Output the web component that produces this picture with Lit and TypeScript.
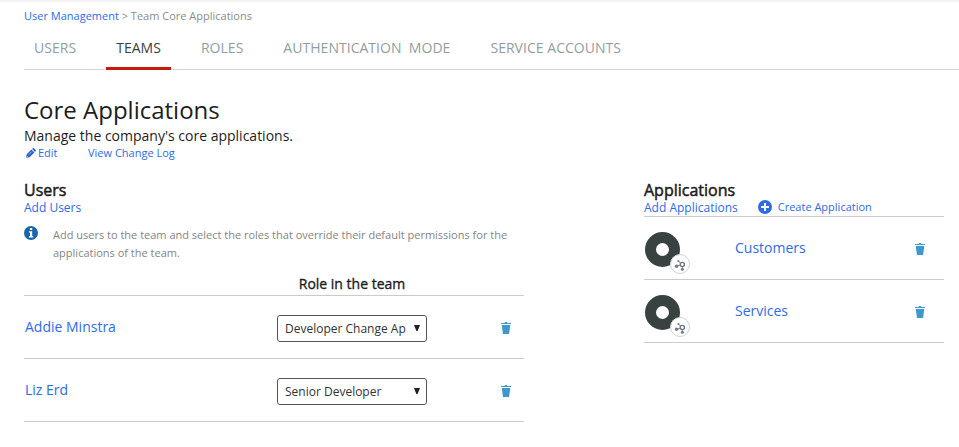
import { LitElement, html, css, svg } from "lit";
import { customElement, property } from "lit/decorators.js";
import { classMap } from "lit/directives/class-map.js";

const trashIcon = html`<svg width="10" height="12" viewBox="0 0 10 12">
  <path fill="#3f98cb" d="M0 1h3.8V0h2.4v1H10v1H0zM.7 3h8.6L8.1 12H2z" />
</svg>`;

const graphBadge = svg`
  <circle cx="35" cy="33" r="9.5" fill="#fff" stroke="#d2d2d2" />
  <g fill="none" stroke="#8a8f94" stroke-width="1.1">
    <circle cx="37.3" cy="33.5" r="2.1" stroke="#687885" stroke-width="1.4" />
    <path d="M33 30.1l2.6 1.8M31.6 35l3.6-.8M37.4 36v2" />
  </g>
  <circle cx="33.4" cy="30" r="1.1" fill="#8c857c" />
  <circle cx="31.6" cy="35.2" r="1.7" fill="#747b82" />
  <circle cx="37.4" cy="38.3" r="1.5" fill="#747b82" />`;

@customElement("role-select")
export class RoleSelect extends LitElement {
  @property() value = "";

  static styles = css`
    :host { display: flex; box-sizing: border-box; width: 150px; height: 27px; border: 1px solid #555; border-radius: 3px; align-items: center; padding: 0 6px 0 7px; background: #fff; }
    .value { width: 123px; overflow: hidden; white-space: nowrap; font-size: 12px; line-height: 18px; color: #333; }
    svg { display: block; margin: 0 0 2px auto; }
  `;

  render() {
    return html`<span class="value">${this.value}</span>
      <svg width="6" height="6" viewBox="0 0 6 6"><path d="M0 0h6L3.6 6H2.4z" fill="#222" /></svg>`;
  }
}

@customElement("app-root")
export class AppRoot extends LitElement {
  private tabs = ["USERS", "TEAMS", "ROLES", "AUTHENTICATION\u00a0 MODE", "SERVICE ACCOUNTS"];
  private users = [
    { name: "Addie Minstra", role: "Developer Change Ap" },
    { name: "Liz Erd", role: "Senior Developer" },
  ];
  private apps = ["Customers", "Services"];

  static styles = css`
    :host { display: block; box-sizing: border-box; height: 447px; overflow: hidden; background: #fff; border-top: 2px solid #f4f4f4; padding: 5px 0 0 24px; font-family: "Open Sans", "Noto Sans", sans-serif; color: #1d1d1d; white-space: nowrap; }
    svg { display: block; }
    a { color: #2e6be6; text-decoration: none; }
    .crumbs { height: 18px; line-height: 18px; font-size: 11px; color: #8c8c8c; }
    .tabs { display: flex; gap: 20px; height: 45px; box-sizing: border-box; border-bottom: 1px solid #d3d6d6; font-size: 14px; letter-spacing: 0.03px; color: #929d9f; }
    .tab { box-sizing: border-box; height: 45px; padding: 13px 10px 0; line-height: 20px; }
    .tab.on { color: #384043; border-bottom: 3px solid #c8190f; }
    h1 { margin: 23px 0 0; font-size: 24px; line-height: 34px; font-weight: 400; }
    .desc { font-size: 14px; line-height: 19px; height: 18px; margin-top: -1px; padding-bottom: 1px; }
    .links { display: flex; height: 16px; font-size: 11px; line-height: 16px; padding-left: 2px; }
    .edit { display: flex; align-items: center; gap: 2px; width: 62px; }
    .columns { display: flex; gap: 120px; margin-top: 19px; }
    .users { width: 500px; }
    .apps { width: 300px; }
    h2 { margin: 0; font-size: 16px; line-height: 20px; font-weight: 400; -webkit-text-stroke: 0.5px #1d1d1d; }
    .add { font-size: 12px; line-height: 16px; height: 16px; display: flex; }
    .info { display: flex; gap: 15px; margin-top: 10px; height: 46px; font-size: 11px; line-height: 18px; color: #858585; }
    .info p { margin: 0; }
    .head { box-sizing: border-box; height: 24px; border-bottom: 1px solid #cbcbcb; padding: 2px 0 0 253px; width: 500px; }
    .head span { display: block; width: 150px; text-align: center; font-size: 14px; line-height: 20px; -webkit-text-stroke: 0.35px #1d1d1d; }
    .row { box-sizing: border-box; height: 63px; border-bottom: 1px solid #cbcbcb; display: grid; align-items: center; font-size: 14px; line-height: 20px; }
    .user { grid-template-columns: 252px 224px 24px; padding-left: 1px; }
    .user > svg { margin-top: 2px; }
    .user role-select { margin-top: 3px; }
    .app { grid-template-columns: 90px 180px 30px; padding-left: 1px; }
    .app > svg:last-child { margin-top: 2px; }
    .logo { margin-top: 14px; align-self: start; }
    .create { font-size: 11px; line-height: 14px; height: 14px; display: flex; gap: 6px; align-items: center; margin-left: 20px; }
    .addbar { box-sizing: border-box; height: 17px; border-bottom: 1px solid #cbcbcb; }
  `;

  render() {
    return html`
      <nav class="crumbs"><a>User Management</a> &gt; Team Core Applications</nav>
      <nav class="tabs">
        ${this.tabs.map((t) => html`<div class=${classMap({ tab: true, on: t === "TEAMS" })}>${t}</div>`)}
      </nav>
      <h1>Core Applications</h1>
      <div class="desc">Manage the company's core applications.</div>
      <div class="links">
        <a class="edit">
          <svg width="10" height="10" viewBox="0 0 10 10">
            <path fill="#2e62cf" d="M0 9.8l.7-3.5L5.4 1.6l3 3-4.8 4.7zM6.1 1L6.9.3q.6-.5 1.2 0l1.6 1.6q.5.6 0 1.2l-.7.8z" />
            <path stroke="#fff" stroke-width=".5" d="M2.8 6.6l2.8-2.8" />
            <path fill="#fff" d="M1 8l1 1-.8.2-.4-.4z" />
          </svg>
          Edit</a>
        <a>View Change Log</a>
      </div>
      <div class="columns">
        <section class="users">
          <h2>Users</h2>
          <div class="add"><a>Add Users</a></div>
          <div class="info">
            <svg width="14" height="14" viewBox="0 0 14 14">
              <circle cx="7" cy="7" r="7" fill="#1b66aa" />
              <path fill="#fff" d="M5.9 2h2.3v2H5.9zM5 5.3h3.2v4.8h1v1.3H5v-1.3h1V6.6H5z" />
            </svg>
            <p>Add users to the team and select the roles that override their default permissions for the<br />applications of the team.</p>
          </div>
          <div class="head"><span>Role in the team</span></div>
          ${this.users.map((u) => html`<div class="row user">
            <a>${u.name}</a><role-select .value=${u.role}></role-select>${trashIcon}
          </div>`)}
        </section>
        <section class="apps">
          <h2>Applications</h2>
          <div class="add addbar">
            <a>Add Applications</a>
            <a class="create">
              <svg width="14" height="14" viewBox="0 0 14 14">
                <circle cx="7" cy="7" r="7" fill="#2e6be6" />
                <path stroke="#fff" stroke-width="2" d="M7 3v8M3 7h8" />
              </svg>
              Create Application</a>
          </div>
          ${this.apps.map((a) => html`<div class="row app">
            <svg class="logo" width="46" height="44" viewBox="0 0 46 44">
              <circle cx="17.5" cy="18.5" r="12" fill="none" stroke="#384241" stroke-width="11" />
              ${graphBadge}
            </svg>
            <a>${a}</a>${trashIcon}
          </div>`)}
        </section>
      </div>
    `;
  }
}
